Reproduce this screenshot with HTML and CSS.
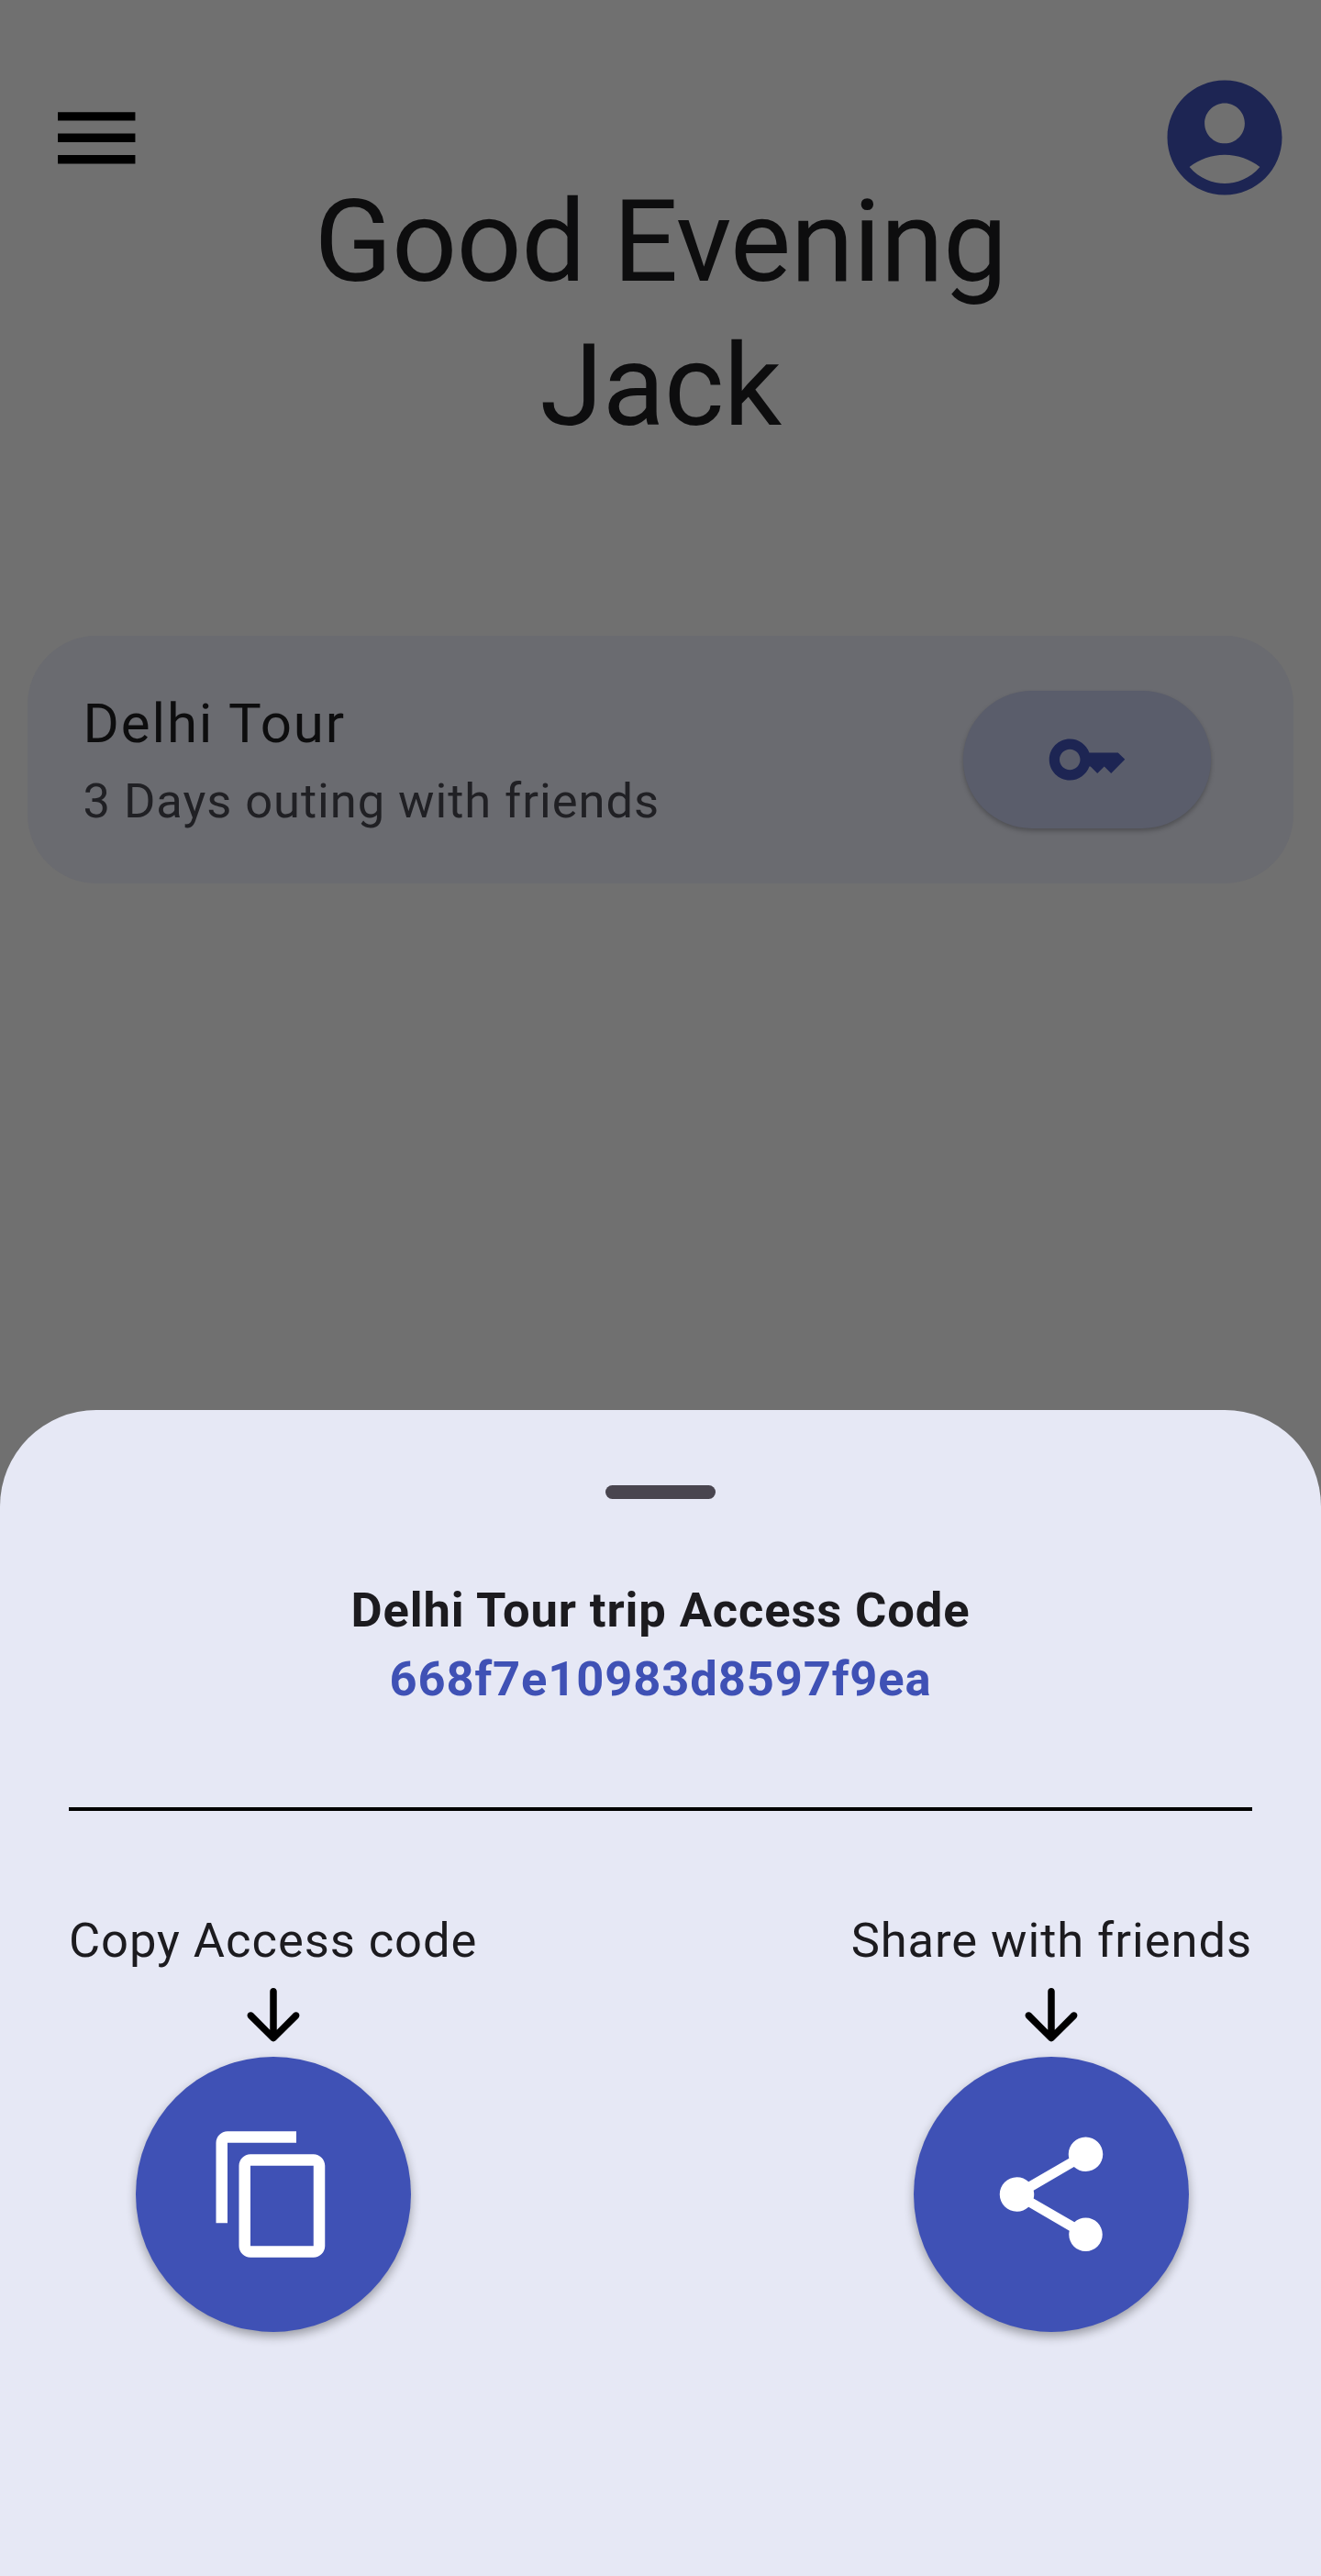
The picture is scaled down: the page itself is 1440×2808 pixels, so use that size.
FILE: index.html
```html
<!DOCTYPE html>
<html lang="en">
<head>
<meta charset="utf-8">
<title>Trip access code</title>
<link rel="stylesheet" href="styles.css">
</head>
<body>
<div class="screen">
  <main class="home">
    <header class="topbar">
      <svg class="menu-icon" viewBox="0 0 24 24"><path d="M3 18h18v-2H3v2zm0-5h18v-2H3v2zm0-7v2h18V6H3z"/></svg>
      <svg class="avatar" viewBox="0 0 24 24"><path d="M12 2C6.48 2 2 6.48 2 12s4.48 10 10 10 10-4.48 10-10S17.52 2 12 2zm0 4c1.93 0 3.5 1.57 3.5 3.5S13.93 13 12 13s-3.5-1.57-3.5-3.5S10.07 6 12 6zm0 14c-2.03 0-4.43-.82-6.14-2.88C7.55 15.8 9.68 15 12 15s4.45.8 6.14 2.12C16.43 19.18 14.03 20 12 20z"/></svg>
    </header>
    <h1 class="greeting">Good Evening<br>Jack</h1>
    <section class="trip-card">
      <div class="trip-text">
        <h2 class="trip-name">Delhi Tour</h2>
        <p class="trip-note">3 Days outing with friends</p>
      </div>
      <button class="key-button" aria-label="Access code">
        <svg class="key-icon" viewBox="0 0 24 24"><path d="M21 10h-8.35C11.83 7.67 9.61 6 7 6c-3.31 0-6 2.69-6 6s2.69 6 6 6c2.61 0 4.83-1.67 5.65-4H13l2 2 2-2 2 2 4-4.04L21 10zM7 15c-1.65 0-3-1.35-3-3s1.35-3 3-3 3 1.35 3 3-1.35 3-3 3z"/></svg>
      </button>
    </section>
  </main>
  <section class="sheet">
    <div class="handle"></div>
    <h2 class="sheet-title">Delhi Tour trip Access Code</h2>
    <p class="access-code">668f7e10983d8597f9ea</p>
    <hr class="divider">
    <div class="actions">
      <div class="action">
        <span class="action-label">Copy Access code</span>
        <svg class="arrow" viewBox="0 0 24 24"><path d="M11 5v11.17l-4.88-4.88c-.39-.39-1.03-.39-1.42 0-.39.39-.39 1.02 0 1.41l6.59 6.59c.39.39 1.02.39 1.41 0l6.59-6.59c.39-.39.39-1.02 0-1.41-.39-.39-1.02-.39-1.41 0L13 16.17V5c0-.55-.45-1-1-1s-1 .45-1 1z"/></svg>
        <button class="round-button" aria-label="Copy">
          <svg class="round-icon" viewBox="0 0 24 24"><path d="M16 1H4c-1.1 0-2 .9-2 2v14h2V3h12V1zm3 4H8c-1.1 0-2 .9-2 2v14c0 1.1.9 2 2 2h11c1.1 0 2-.9 2-2V7c0-1.1-.9-2-2-2zm0 16H8V7h11v14z"/></svg>
        </button>
      </div>
      <div class="action">
        <span class="action-label">Share with friends</span>
        <svg class="arrow" viewBox="0 0 24 24"><path d="M11 5v11.17l-4.88-4.88c-.39-.39-1.03-.39-1.42 0-.39.39-.39 1.02 0 1.41l6.59 6.59c.39.39 1.02.39 1.41 0l6.59-6.59c.39-.39.39-1.02 0-1.41-.39-.39-1.02-.39-1.41 0L13 16.17V5c0-.55-.45-1-1-1s-1 .45-1 1z"/></svg>
        <button class="round-button" aria-label="Share">
          <svg class="round-icon" viewBox="0 0 24 24"><path d="M18 16.08c-.76 0-1.44.3-1.96.77L8.91 12.7c.05-.23.09-.46.09-.7s-.04-.47-.09-.7l7.05-4.11c.54.5 1.25.81 2.04.81 1.66 0 3-1.34 3-3s-1.34-3-3-3-3 1.34-3 3c0 .24.04.47.09.7L8.04 9.81C7.5 9.31 6.79 9 6 9c-1.66 0-3 1.34-3 3s1.34 3 3 3c.79 0 1.5-.31 2.04-.81l7.12 4.16c-.05.21-.08.43-.08.65 0 1.61 1.31 2.92 2.92 2.92s2.92-1.31 2.92-2.92-1.31-2.92-2.92-2.92z"/></svg>
        </button>
      </div>
    </div>
  </section>
</div>
</body>
</html>
```
FILE: styles.css
```css
* {
  box-sizing: border-box;
  margin: 0;
  padding: 0;
}

body {
  background: #707070;
  font-family: Roboto, "Liberation Sans", sans-serif;
}

svg {
  display: block;
  flex: none;
}

button {
  display: flex;
  align-items: center;
  justify-content: center;
  flex: none;
  border: none;
}

.screen {
  display: flex;
  flex-direction: column;
  width: 1440px;
  height: 2808px;
  overflow: hidden;
}

.home {
  height: 1536.5px;
  flex: none;
  padding: 75px 30px 0;
}

.topbar {
  display: flex;
  align-items: center;
  justify-content: space-between;
  padding-left: 18.75px;
}

.menu-icon {
  width: 112.5px;
  height: 112.5px;
  fill: #000;
}

.avatar {
  width: 150px;
  height: 150px;
  fill: #1d2553;
}

.greeting {
  margin-top: -39px;
  color: #0d0d0e;
  font-size: 125px;
  font-weight: 400;
  line-height: 156.5px;
  letter-spacing: -0.7px;
  text-align: center;
}

.trip-card {
  display: flex;
  align-items: center;
  justify-content: space-between;
  height: 270px;
  margin-top: 193.5px;
  padding: 0 90px 0 60.5px;
  border-radius: 75px;
  background: #6a6b70;
}

.trip-text {
  display: flex;
  flex-direction: column;
  gap: 2px;
}

.trip-name {
  color: #0d0d0e;
  font-size: 60px;
  font-weight: 400;
  line-height: 90px;
  letter-spacing: 1.875px;
}

.trip-note {
  color: #202024;
  font-size: 52.5px;
  line-height: 75px;
  letter-spacing: 0.9375px;
}

.key-button {
  width: 270px;
  height: 150px;
  border-radius: 75px;
  background: #5a5d6b;
  box-shadow: 0 3px 5px rgba(0, 0, 0, 0.25);
}

.key-icon {
  width: 90px;
  height: 90px;
  fill: #1d2553;
}

.sheet {
  display: flex;
  flex: 1;
  flex-direction: column;
  padding: 82.5px 75px 0;
  border-radius: 105px 105px 0 0;
  background: #e6e8f5;
  color: #1c1b1f;
}

.handle {
  align-self: center;
  flex: none;
  width: 120px;
  height: 15px;
  margin-bottom: 83.5px;
  border-radius: 7.5px;
  background: #49454f;
}

.sheet-title,
.access-code {
  font-size: 52.5px;
  font-weight: 700;
  line-height: 75px;
  letter-spacing: 0.87px;
  text-align: center;
}

.access-code {
  color: #3f51b5;
}

.divider {
  height: 4px;
  margin: 102.5px 0 103.5px;
  border: none;
  background: #000;
}

.actions {
  display: flex;
  justify-content: space-between;
}

.action {
  display: flex;
  flex-direction: column;
  align-items: center;
}

.action-label {
  margin-bottom: -0.5px;
  font-size: 52.5px;
  line-height: 75px;
  letter-spacing: 0.9375px;
  white-space: nowrap;
}

.arrow {
  width: 90px;
  height: 90px;
  fill: #000;
}

.round-button {
  width: 300px;
  height: 300px;
  border-radius: 50%;
  background: #3f51b5;
  box-shadow: 0 5px 11px rgba(0, 0, 0, 0.33);
}

.round-icon {
  width: 150px;
  height: 150px;
  fill: #fff;
}
```
